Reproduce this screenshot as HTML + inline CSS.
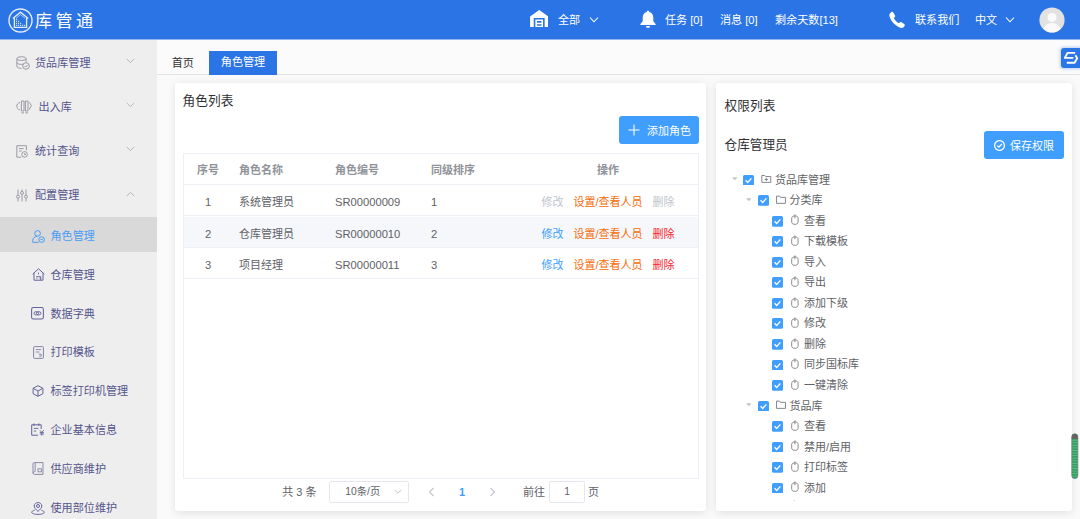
<!DOCTYPE html>
<html lang="zh-CN">
<head>
<meta charset="utf-8">
<title>库管通 - 角色管理</title>
<style>
*{box-sizing:border-box;margin:0;padding:0}
html,body{width:1080px;height:519px;overflow:hidden}
body{font-family:"Liberation Sans","Noto Sans CJK SC",sans-serif;font-size:12px;color:#333;background:#fafafa;position:relative}
.abs{position:absolute;white-space:nowrap}
#header{position:absolute;left:0;top:0;width:1080px;height:39px;background:#2b74e6;color:#fff}
#header .t{position:absolute;top:0.5px;height:39px;line-height:39px;font-size:11.1px;white-space:nowrap;color:#fff}
#logo-text{position:absolute;left:35px;top:2px;height:39px;line-height:40px;font-size:17px;letter-spacing:3.5px;color:#fff;white-space:nowrap}
#sidebar{position:absolute;left:0;top:39px;width:157px;height:480px;background:#eeeeee}
.m1{position:absolute;left:0;width:157px;height:44px;line-height:44px;color:#55558c;font-size:11.1px}
.m1 span{position:absolute;left:35px;top:0}
.m2{position:absolute;left:0;width:157px;height:38px;line-height:38px;color:#55558c;font-size:11.1px}
.m2 span{position:absolute;left:50.5px;top:0}
.m2.active{background:#d9d9d9;color:#4a9cf5}
#tabs{position:absolute;left:157px;top:39px;width:923px;height:35.7px;background:#fbfbfb;border-bottom:1px solid #e2e2e2}
.card{position:absolute;background:#fff;box-shadow:0 1.5px 9px rgba(0,0,0,.1);border-radius:3px}

.btn{background:#409eff;color:#fff;border-radius:3px;font-size:11px}
#tbl{position:absolute;left:8px;top:70px;width:516px;height:326px;border:1px solid #eef0f5;font-size:11px;color:#606266}
.tr{position:absolute;left:0;width:514px;height:32px;line-height:32px;border-bottom:1px solid #eef0f5}
.tr.th{color:#909399;font-weight:bold}
.tr.hl{background:#f5f7fa}
.tr span{position:absolute;top:0;white-space:nowrap}
.c1{left:0;width:48px;text-align:center}
.c2{left:55px}.c3{left:151px}.c4{left:247px}
.tr:not(.th) .c1,.tr:not(.th) .c3,.tr:not(.th) .c4{font-size:11.2px}
.c5{left:334px;width:180px;text-align:center}
.c5 i{font-style:normal;margin:0 5px}
.dis{color:#c0c4cc}.or{color:#f56c0a}.bl{color:#409eff}.rd{color:#f5222d}
#pg{position:absolute;left:0;top:398.7px;width:531px;height:20px;line-height:20px;font-size:11px;color:#606266}
.box{border:1px solid #e4e7ed;border-radius:2px;background:#fff;color:#606266}
.tn{height:20px;line-height:20px;font-size:11px;color:#606266}

</style>
</head>
<body>
<div id="header">
  <svg class="abs" style="left:7.9px;top:7.9px" width="25" height="25" viewBox="0 0 25 25" fill="none" stroke="#e4edfc">
    <circle cx="12.5" cy="12.5" r="11.5" stroke-width="1.4"/>
    <path d="M4.8 10.4 L12.5 4.2 L20.2 10.4" stroke-width="1.3"/>
    <path d="M6.4 9.4 V19.4 H18.6 V9.4" stroke-width="1.3"/>
    <path d="M8 10.2 L12.5 6.6 L17 10.2" stroke-width="0.8" stroke="#c3d6f8"/>
    <path d="M8.049999999999999 11.4h1.1M8.049999999999999 13.4h1.1M8.049999999999999 15.4h1.1M8.049999999999999 17.4h1.1M10.049999999999999 13.4h1.1M10.049999999999999 15.4h1.1M10.049999999999999 17.4h1.1M12.049999999999999 15.4h1.1M12.049999999999999 17.4h1.1M14.049999999999999 17.4h1.1M16.05 17.4h1.1" stroke-width="1.1" stroke="#cfdefa"/>
  </svg>
  <div id="logo-text">库管通</div>

  <svg class="abs" style="left:529.8px;top:9.6px" width="18.4" height="17.2" viewBox="0 0 18 17" fill="#fff">
    <path d="M9 0 L18 6.4 V17 H14.4 V7.8 H3.6 V17 H0 V6.4 Z"/>
    <path d="M5.2 9.4 H12.8 V17 H5.2 Z M6.8 11 V12.6 H11.2 V11 Z M6.8 14 V15.6 H11.2 V14 Z" fill-rule="evenodd"/>
  </svg>
  <div class="t" style="left:558px">全部</div>
  <svg class="abs" style="left:589px;top:16px" width="10" height="8" viewBox="0 0 10 8" fill="none" stroke="#fff" stroke-width="1.1"><path d="M1 1.5 L5 5.8 L9 1.5"/></svg>

  <svg class="abs" style="left:639px;top:10px" width="18" height="19" viewBox="0 0 18 19" fill="#fff">
    <path d="M9 0.8 C9.8 0.8 10.3 1.3 10.3 2 C13 2.7 14.3 5 14.3 7.6 V11.2 L16.6 14 V14.9 H1.4 V14 L3.7 11.2 V7.6 C3.7 5 5 2.7 7.7 2 C7.7 1.3 8.2 0.8 9 0.8 Z"/>
    <path d="M7 16 H11 C11 17.2 10.1 18 9 18 C7.9 18 7 17.2 7 16 Z"/>
  </svg>
  <div class="t" style="left:665px">任务 [0]</div>
  <div class="t" style="left:720px">消息 [0]</div>
  <div class="t" style="left:775px">剩余天数[13]</div>

  <svg class="abs" style="left:888px;top:11px" width="18" height="18" viewBox="0 0 18 18" fill="#fff">
    <path d="M3.2 1.2 C4 0.6 4.8 0.8 5.3 1.6 L7 4.4 C7.4 5.1 7.2 5.8 6.6 6.3 L5.8 6.9 C6.8 9 8.6 11 10.9 12.3 L11.6 11.5 C12.1 10.9 12.9 10.8 13.5 11.2 L16.2 13 C16.9 13.5 17 14.3 16.5 15 L15.8 15.9 C14.8 17.1 13.2 17.3 11.6 16.6 C6.9 14.5 3 10.3 1.6 5.6 C1.1 4 1.5 2.5 2.6 1.7 Z"/>
  </svg>
  <div class="t" style="left:915px">联系我们</div>
  <div class="t" style="left:975px">中文</div>
  <svg class="abs" style="left:1005px;top:16px" width="10" height="8" viewBox="0 0 10 8" fill="none" stroke="#fff" stroke-width="1.1"><path d="M1 1.5 L5 5.8 L9 1.5"/></svg>
  <svg class="abs" style="left:1039px;top:7px" width="26" height="26" viewBox="0 0 26 26">
    <defs><clipPath id="avc"><circle cx="13" cy="13" r="12.5"/></clipPath></defs>
    <circle cx="13" cy="13" r="12.6" fill="#e2e2e2"/>
    <g clip-path="url(#avc)" fill="#fafafa"><circle cx="13" cy="10.5" r="4.6"/><ellipse cx="13" cy="23" rx="8.5" ry="7"/></g>
  </svg>
</div>

<div id="sidebar">
  <div class="m1" style="top:1.7px"><span style="left:35px">货品库管理</span></div>
  <svg class="abs" style="left:16px;top:17.0px" width="14" height="14" viewBox="0 0 14 14" fill="none" stroke="#9a9aa6" stroke-width="1"><ellipse cx="5.5" cy="2.6" rx="4.6" ry="1.9"/><path d="M0.9 2.6V10.4C0.9 11.5 2.9 12.3 5.5 12.3 M10.1 2.6V6.2 M0.9 6.5C0.9 7.6 2.9 8.4 5.5 8.4 C6.2 8.4 6.8 8.35 7.3 8.25"/><circle cx="10" cy="10" r="3.3"/><path d="M8.5 10 L9.6 11.1 L11.6 8.9"/></svg>
  <svg class="abs" style="left:126px;top:19.2px" width="9" height="6" viewBox="0 0 9 6" fill="none" stroke="#b4b4bc" stroke-width="1"><path d="M0.8 1 L4.5 4.6 L8.2 1"/></svg>
  <div class="m1" style="top:45.8px"><span style="left:38.5px">出入库</span></div>
  <svg class="abs" style="left:16px;top:61.1px" width="16" height="14" viewBox="0 0 16 14" fill="none" stroke="#9a9aa6" stroke-width="1"><path d="M5.4 1H8V11H5.4Z M9.4 1H12V11H9.4Z M5.4 12.8H8M9.4 12.8H12"/><path d="M4 2.4C1.8 3 0.8 4.6 0.8 6.2C0.8 8 2 9.4 4 10"/><path d="M13.2 2.2L15.4 5.6L13.2 9.6"/></svg>
  <svg class="abs" style="left:126px;top:63.3px" width="9" height="6" viewBox="0 0 9 6" fill="none" stroke="#b4b4bc" stroke-width="1"><path d="M0.8 1 L4.5 4.6 L8.2 1"/></svg>
  <div class="m1" style="top:89.8px"><span style="left:35px">统计查询</span></div>
  <svg class="abs" style="left:16px;top:105.6px" width="12" height="13" viewBox="0 0 12 13" fill="none" stroke="#9a9aa6" stroke-width="1"><path d="M10.4 5.2V0.7H0.8V12.2H5.4"/><path d="M3 3.6H7.6 M3 6H5.6"/><circle cx="8.6" cy="9.4" r="2.8"/><path d="M8.6 8V9.6H10"/></svg>
  <svg class="abs" style="left:126px;top:107.3px" width="9" height="6" viewBox="0 0 9 6" fill="none" stroke="#b4b4bc" stroke-width="1"><path d="M0.8 1 L4.5 4.6 L8.2 1"/></svg>
  <div class="m1" style="top:134.3px"><span style="left:35px">配置管理</span></div>
  <svg class="abs" style="left:16px;top:150.1px" width="12" height="13" viewBox="0 0 12 13" fill="none" stroke="#9a9aa6" stroke-width="1"><path d="M2 0.5V6.2M2 9.2V12.5M6 0.5V2.4M6 5.4V12.5M10 0.5V6.2M10 9.2V12.5"/><circle cx="2" cy="7.7" r="1.5"/><circle cx="6" cy="3.9" r="1.5"/><circle cx="10" cy="7.7" r="1.5"/></svg>
  <svg class="abs" style="left:126px;top:151.8px" width="9" height="6" viewBox="0 0 9 6" fill="none" stroke="#b4b4bc" stroke-width="1"><path d="M0.8 5 L4.5 1.4 L8.2 5"/></svg>
  <div class="m2 active" style="top:177.5px;height:35.5px;line-height:39.4px"><span>角色管理</span></div>
  <svg class="abs" style="left:31.5px;top:190.7px" width="13" height="13" viewBox="0 0 13 13" fill="none" stroke="#4a9cf5" stroke-width="1"><circle cx="5.6" cy="3.4" r="2.8"/><path d="M6.6 12.3H0.7V10.6C0.7 8.2 2.6 6.6 5 6.4"/><circle cx="9.6" cy="9.6" r="2.8"/><path d="M8.4 9.6H10.8"/></svg>
  <div class="m2" style="top:216.6px"><span>仓库管理</span></div>
  <svg class="abs" style="left:31.5px;top:229.1px" width="13" height="13" viewBox="0 0 13 13" fill="none" stroke="#62629a" stroke-width="1"><path d="M0.6 6.2L6.5 0.8L12.4 6.2 M2 5.2V12.2H11V5.2"/><path d="M6.5 4.6V6.4 M4.3 8.6H8.7V12" stroke-width="0.9"/><path d="M4.4 10.2h1M7.6 10.2h1" stroke-width="1.2"/></svg>
  <div class="m2" style="top:255.7px"><span>数据字典</span></div>
  <svg class="abs" style="left:31.4px;top:268.1px" width="13" height="12.6" viewBox="0 0 13 12.6" fill="none" stroke="#62629a" stroke-width="1.05"><rect x="0.6" y="0.6" width="11.8" height="11.4" rx="1.8"/><ellipse cx="5.3" cy="6.3" rx="2.3" ry="1.7" stroke-width="0.9"/><ellipse cx="7.7" cy="6.3" rx="2.3" ry="1.7" stroke-width="0.9"/></svg>
  <div class="m2" style="top:294.2px"><span>打印模板</span></div>
  <svg class="abs" style="left:32.5px;top:306.7px" width="11" height="13" viewBox="0 0 11 13" fill="none" stroke="#8585a6" stroke-width="1"><rect x="0.6" y="0.6" width="9.8" height="11.8" rx="0.8"/><path d="M2.8 3.6H8.2 M2.8 6H6.4 M5.6 8.2H8.2V10.2H6.2" stroke-width="0.9"/></svg>
  <div class="m2" style="top:333.0px"><span>标签打印机管理</span></div>
  <svg class="abs" style="left:32px;top:346.0px" width="12" height="12" viewBox="0 0 12 12" fill="none" stroke="#62629a" stroke-width="1"><path d="M6 0.7L10.9 3.3V8.7L6 11.3L1.1 8.7V3.3Z M1.3 3.4L6 6L10.7 3.4 M6 6V11.2"/></svg>
  <div class="m2" style="top:371.7px"><span>企业基本信息</span></div>
  <svg class="abs" style="left:31px;top:384.2px" width="14" height="13" viewBox="0 0 14 13" fill="none" stroke="#62629a" stroke-width="1"><path d="M10.2 6V1.8H0.7V12.2H7"/><path d="M3 0.4V3 M7.8 0.4V3 M2.8 5.4H7.4 M2.8 8H5.2" stroke-width="0.9"/><path d="M8.8 7.2L10.8 9.4L12.8 7.2 M8.8 9.6H12.8 M8.8 11H12.8 M10.8 9.4V12.6" stroke-width="0.9"/></svg>
  <div class="m2" style="top:410.9px"><span>供应商维护</span></div>
  <svg class="abs" style="left:32px;top:423.4px" width="12" height="13" viewBox="0 0 12 13" fill="none" stroke="#8585a6" stroke-width="1"><path d="M1 10.8V1.8C1 1.1 1.6 0.6 2.3 0.6H11V12.4H2.4C1.6 12.4 1 11.8 1 11 C1 10.2 1.6 9.6 2.4 9.6H3" stroke-width="0.95"/><path d="M3.2 0.8V9.4" stroke-width="0.9"/><rect x="6" y="6.8" width="3.4" height="3" stroke-width="0.9"/></svg>
  <div class="m2" style="top:450.0px"><span>使用部位维护</span></div>
  <svg class="abs" style="left:31px;top:462.5px" width="14" height="13" viewBox="0 0 14 13" fill="none" stroke="#62629a" stroke-width="1"><path d="M7 9.4C4.8 7.4 3.2 5.8 3.2 4C3.2 2 4.9 0.6 7 0.6C9.1 0.6 10.8 2 10.8 4C10.8 5.8 9.2 7.4 7 9.4Z"/><circle cx="7" cy="4" r="1.5"/><path d="M3.6 8.2C1.8 8.7 0.7 9.5 0.7 10.3C0.7 11.5 3.5 12.4 7 12.4C10.5 12.4 13.3 11.5 13.3 10.3C13.3 9.5 12.2 8.7 10.4 8.2"/></svg>
</div>

<div id="tabs">
  <div class="abs" style="left:14.7px;top:12.6px;height:23px;line-height:23px;font-size:11.1px;color:#333">首页</div>
  <div class="abs" style="left:52px;top:12.4px;width:68px;height:23.3px;line-height:23.6px;font-size:11.1px;color:#fff;background:#2b74e6;text-align:center">角色管理</div>
</div>

<div class="card" id="left" style="left:175px;top:83px;width:531px;height:428px">
  <div class="abs" style="left:7.6px;top:8.2px;height:20px;line-height:20px;font-size:12.7px;color:#303133">角色列表</div>
  <div class="abs btn" style="left:444px;top:33px;width:80px;height:28px"><svg style="position:absolute;left:9px;top:8px" width="12" height="12" viewBox="0 0 12 12" stroke="#fff" stroke-width="1.1"><path d="M6 0.5V11.5M0.5 6H11.5"/></svg><span style="position:absolute;left:28px;top:1px;line-height:28px">添加角色</span></div>
  <div id="tbl">
    <div class="tr th" style="top:0;height:31.4px;line-height:33px"><span class="c1">序号</span><span class="c2">角色名称</span><span class="c3">角色编号</span><span class="c4">同级排序</span><span class="c5">操作</span></div>
    <div class="tr" style="top:31.4px;height:31.1px;line-height:35px"><span class="c1">1</span><span class="c2">系统管理员</span><span class="c3">SR00000009</span><span class="c4">1</span><span class="c5"><i class="dis">修改</i><i class="or">设置/查看人员</i><i class="dis">删除</i></span></div>
    <div class="tr hl" style="top:62.5px;height:31.7px;line-height:34px"><span class="c1">2</span><span class="c2">仓库管理员</span><span class="c3">SR00000010</span><span class="c4">2</span><span class="c5"><i class="bl">修改</i><i class="or">设置/查看人员</i><i class="rd">删除</i></span></div>
    <div class="tr" style="top:94.2px;height:31.3px;line-height:35px"><span class="c1">3</span><span class="c2">项目经理</span><span class="c3">SR00000011</span><span class="c4">3</span><span class="c5"><i class="bl">修改</i><i class="or">设置/查看人员</i><i class="rd">删除</i></span></div>
  </div>
  <div id="pg">
    <div class="abs" style="left:107.3px;top:0">共 3 条</div>
    <div class="abs box" style="left:154.3px;top:-0.6px;width:79.5px;height:22px"><span style="position:absolute;left:15px;top:0;line-height:20px;font-size:10.3px">10条/页</span><svg style="position:absolute;left:64px;top:7px" width="8" height="6" viewBox="0 0 8 6" fill="none" stroke="#c0c4cc" stroke-width="1"><path d="M0.8 1 L4 4.2 L7.2 1"/></svg></div>
    <svg class="abs" style="left:253px;top:5px" width="7" height="10" viewBox="0 0 7 10" fill="none" stroke="#c0c4cc" stroke-width="1.1"><path d="M5.5 1 L1.5 5 L5.5 9"/></svg>
    <div class="abs" style="left:284px;top:0;color:#409eff;font-weight:bold;font-size:11px">1</div>
    <svg class="abs" style="left:314px;top:5px" width="7" height="10" viewBox="0 0 7 10" fill="none" stroke="#c0c4cc" stroke-width="1.1"><path d="M1.5 1 L5.5 5 L1.5 9"/></svg>
    <div class="abs" style="left:348px;top:0">前往</div>
    <div class="abs box" style="left:374px;top:-0.6px;width:36px;height:22px;text-align:center;line-height:20px;font-size:10.3px">1</div>
    <div class="abs" style="left:413px;top:0">页</div>
  </div>
</div>
<div class="card" id="right" style="left:716px;top:83px;width:356px;height:428px">
  <div class="abs" style="left:8.6px;top:12.8px;height:20px;line-height:20px;font-size:12.7px;color:#303133">权限列表</div>
  <div class="abs" style="left:8.6px;top:51.6px;height:20px;line-height:20px;font-size:12.6px;color:#303133">仓库管理员</div>
  <div class="abs btn" style="left:268px;top:48px;width:80px;height:28px"><svg style="position:absolute;left:10px;top:9px" width="11" height="11" viewBox="0 0 11 11" fill="none" stroke="#fff" stroke-width="1.25"><circle cx="5.5" cy="5.5" r="4.9"/><path d="M3.2 5.6 L4.9 7.2 L7.9 4"/></svg><span style="position:absolute;left:26px;top:1px;line-height:28px">保存权限</span></div>
    <svg class="abs" style="left:15.9px;top:94.3px" width="5.6" height="3.6" viewBox="0 0 7 5" preserveAspectRatio="none"><path d="M0 0.5H7L3.5 4.5Z" fill="#c0c4cc"/></svg>
    <svg class="abs" style="left:27.1px;top:91.6px" width="11" height="10.8" viewBox="0 0 11 11" preserveAspectRatio="none"><rect width="11" height="11" rx="1.6" fill="#409eff"/><path d="M2.6 5.4 L4.7 7.6 L8.4 3.4" fill="none" stroke="#fff" stroke-width="1.3"/></svg>
    <svg class="abs" style="left:45.2px;top:90.7px" width="10.6" height="9.1" viewBox="0 0 11 10" fill="none" stroke="#797b80" stroke-width="1"><path d="M0.6 1.6 H3.8 L4.8 2.8 H10.4 V9.2 H0.6 Z"/><path d="M5.5 4.2V7.8M3.7 6H7.3"/></svg>
    <div class="abs tn" style="left:59.0px;top:86.5px">货品库管理</div>
    <svg class="abs" style="left:29.9px;top:114.9px" width="5.6" height="3.6" viewBox="0 0 7 5" preserveAspectRatio="none"><path d="M0 0.5H7L3.5 4.5Z" fill="#c0c4cc"/></svg>
    <svg class="abs" style="left:41.6px;top:112.2px" width="11" height="10.8" viewBox="0 0 11 11" preserveAspectRatio="none"><rect width="11" height="11" rx="1.6" fill="#409eff"/><path d="M2.6 5.4 L4.7 7.6 L8.4 3.4" fill="none" stroke="#fff" stroke-width="1.3"/></svg>
    <svg class="abs" style="left:59.6px;top:112.0px" width="10" height="9.1" viewBox="0 0 11 10" fill="none" stroke="#797b80" stroke-width="1"><path d="M0.6 1.2 H4 L5 2.6 H10.4 V9.2 H0.6 Z"/></svg>
    <div class="abs tn" style="left:73.5px;top:107.1px">分类库</div>
    <svg class="abs" style="left:55.9px;top:132.8px" width="11" height="10.8" viewBox="0 0 11 11" preserveAspectRatio="none"><rect width="11" height="11" rx="1.6" fill="#409eff"/><path d="M2.6 5.4 L4.7 7.6 L8.4 3.4" fill="none" stroke="#fff" stroke-width="1.3"/></svg>
    <svg class="abs" style="left:75.0px;top:131.4px" width="7.8" height="11" viewBox="0 0 8 11" fill="none" stroke="#7d7f84" stroke-width="0.95"><path d="M3.2 1.9 H4.8 C6.2 1.9 7.3 3 7.3 4.4 V7.9 C7.3 9.3 6.2 10.4 4.8 10.4 H3.2 C1.8 10.4 0.7 9.3 0.7 7.9 V4.4 C0.7 3 1.8 1.9 3.2 1.9 Z"/><path d="M4 0.3 V4.2"/></svg>
    <div class="abs tn" style="left:88.0px;top:127.7px">查看</div>
    <svg class="abs" style="left:55.9px;top:153.3px" width="11" height="10.8" viewBox="0 0 11 11" preserveAspectRatio="none"><rect width="11" height="11" rx="1.6" fill="#409eff"/><path d="M2.6 5.4 L4.7 7.6 L8.4 3.4" fill="none" stroke="#fff" stroke-width="1.3"/></svg>
    <svg class="abs" style="left:75.0px;top:151.9px" width="7.8" height="11" viewBox="0 0 8 11" fill="none" stroke="#7d7f84" stroke-width="0.95"><path d="M3.2 1.9 H4.8 C6.2 1.9 7.3 3 7.3 4.4 V7.9 C7.3 9.3 6.2 10.4 4.8 10.4 H3.2 C1.8 10.4 0.7 9.3 0.7 7.9 V4.4 C0.7 3 1.8 1.9 3.2 1.9 Z"/><path d="M4 0.3 V4.2"/></svg>
    <div class="abs tn" style="left:88.0px;top:148.2px">下载模板</div>
    <svg class="abs" style="left:55.9px;top:173.8px" width="11" height="10.8" viewBox="0 0 11 11" preserveAspectRatio="none"><rect width="11" height="11" rx="1.6" fill="#409eff"/><path d="M2.6 5.4 L4.7 7.6 L8.4 3.4" fill="none" stroke="#fff" stroke-width="1.3"/></svg>
    <svg class="abs" style="left:75.0px;top:172.4px" width="7.8" height="11" viewBox="0 0 8 11" fill="none" stroke="#7d7f84" stroke-width="0.95"><path d="M3.2 1.9 H4.8 C6.2 1.9 7.3 3 7.3 4.4 V7.9 C7.3 9.3 6.2 10.4 4.8 10.4 H3.2 C1.8 10.4 0.7 9.3 0.7 7.9 V4.4 C0.7 3 1.8 1.9 3.2 1.9 Z"/><path d="M4 0.3 V4.2"/></svg>
    <div class="abs tn" style="left:88.0px;top:168.7px">导入</div>
    <svg class="abs" style="left:55.9px;top:194.4px" width="11" height="10.8" viewBox="0 0 11 11" preserveAspectRatio="none"><rect width="11" height="11" rx="1.6" fill="#409eff"/><path d="M2.6 5.4 L4.7 7.6 L8.4 3.4" fill="none" stroke="#fff" stroke-width="1.3"/></svg>
    <svg class="abs" style="left:75.0px;top:193.0px" width="7.8" height="11" viewBox="0 0 8 11" fill="none" stroke="#7d7f84" stroke-width="0.95"><path d="M3.2 1.9 H4.8 C6.2 1.9 7.3 3 7.3 4.4 V7.9 C7.3 9.3 6.2 10.4 4.8 10.4 H3.2 C1.8 10.4 0.7 9.3 0.7 7.9 V4.4 C0.7 3 1.8 1.9 3.2 1.9 Z"/><path d="M4 0.3 V4.2"/></svg>
    <div class="abs tn" style="left:88.0px;top:189.3px">导出</div>
    <svg class="abs" style="left:55.9px;top:214.9px" width="11" height="10.8" viewBox="0 0 11 11" preserveAspectRatio="none"><rect width="11" height="11" rx="1.6" fill="#409eff"/><path d="M2.6 5.4 L4.7 7.6 L8.4 3.4" fill="none" stroke="#fff" stroke-width="1.3"/></svg>
    <svg class="abs" style="left:75.0px;top:213.5px" width="7.8" height="11" viewBox="0 0 8 11" fill="none" stroke="#7d7f84" stroke-width="0.95"><path d="M3.2 1.9 H4.8 C6.2 1.9 7.3 3 7.3 4.4 V7.9 C7.3 9.3 6.2 10.4 4.8 10.4 H3.2 C1.8 10.4 0.7 9.3 0.7 7.9 V4.4 C0.7 3 1.8 1.9 3.2 1.9 Z"/><path d="M4 0.3 V4.2"/></svg>
    <div class="abs tn" style="left:88.0px;top:209.8px">添加下级</div>
    <svg class="abs" style="left:55.9px;top:235.4px" width="11" height="10.8" viewBox="0 0 11 11" preserveAspectRatio="none"><rect width="11" height="11" rx="1.6" fill="#409eff"/><path d="M2.6 5.4 L4.7 7.6 L8.4 3.4" fill="none" stroke="#fff" stroke-width="1.3"/></svg>
    <svg class="abs" style="left:75.0px;top:234.0px" width="7.8" height="11" viewBox="0 0 8 11" fill="none" stroke="#7d7f84" stroke-width="0.95"><path d="M3.2 1.9 H4.8 C6.2 1.9 7.3 3 7.3 4.4 V7.9 C7.3 9.3 6.2 10.4 4.8 10.4 H3.2 C1.8 10.4 0.7 9.3 0.7 7.9 V4.4 C0.7 3 1.8 1.9 3.2 1.9 Z"/><path d="M4 0.3 V4.2"/></svg>
    <div class="abs tn" style="left:88.0px;top:230.3px">修改</div>
    <svg class="abs" style="left:55.9px;top:256.0px" width="11" height="10.8" viewBox="0 0 11 11" preserveAspectRatio="none"><rect width="11" height="11" rx="1.6" fill="#409eff"/><path d="M2.6 5.4 L4.7 7.6 L8.4 3.4" fill="none" stroke="#fff" stroke-width="1.3"/></svg>
    <svg class="abs" style="left:75.0px;top:254.6px" width="7.8" height="11" viewBox="0 0 8 11" fill="none" stroke="#7d7f84" stroke-width="0.95"><path d="M3.2 1.9 H4.8 C6.2 1.9 7.3 3 7.3 4.4 V7.9 C7.3 9.3 6.2 10.4 4.8 10.4 H3.2 C1.8 10.4 0.7 9.3 0.7 7.9 V4.4 C0.7 3 1.8 1.9 3.2 1.9 Z"/><path d="M4 0.3 V4.2"/></svg>
    <div class="abs tn" style="left:88.0px;top:250.9px">删除</div>
    <svg class="abs" style="left:55.9px;top:276.5px" width="11" height="10.8" viewBox="0 0 11 11" preserveAspectRatio="none"><rect width="11" height="11" rx="1.6" fill="#409eff"/><path d="M2.6 5.4 L4.7 7.6 L8.4 3.4" fill="none" stroke="#fff" stroke-width="1.3"/></svg>
    <svg class="abs" style="left:75.0px;top:275.1px" width="7.8" height="11" viewBox="0 0 8 11" fill="none" stroke="#7d7f84" stroke-width="0.95"><path d="M3.2 1.9 H4.8 C6.2 1.9 7.3 3 7.3 4.4 V7.9 C7.3 9.3 6.2 10.4 4.8 10.4 H3.2 C1.8 10.4 0.7 9.3 0.7 7.9 V4.4 C0.7 3 1.8 1.9 3.2 1.9 Z"/><path d="M4 0.3 V4.2"/></svg>
    <div class="abs tn" style="left:88.0px;top:271.4px">同步国标库</div>
    <svg class="abs" style="left:55.9px;top:297.0px" width="11" height="10.8" viewBox="0 0 11 11" preserveAspectRatio="none"><rect width="11" height="11" rx="1.6" fill="#409eff"/><path d="M2.6 5.4 L4.7 7.6 L8.4 3.4" fill="none" stroke="#fff" stroke-width="1.3"/></svg>
    <svg class="abs" style="left:75.0px;top:295.6px" width="7.8" height="11" viewBox="0 0 8 11" fill="none" stroke="#7d7f84" stroke-width="0.95"><path d="M3.2 1.9 H4.8 C6.2 1.9 7.3 3 7.3 4.4 V7.9 C7.3 9.3 6.2 10.4 4.8 10.4 H3.2 C1.8 10.4 0.7 9.3 0.7 7.9 V4.4 C0.7 3 1.8 1.9 3.2 1.9 Z"/><path d="M4 0.3 V4.2"/></svg>
    <div class="abs tn" style="left:88.0px;top:291.9px">一键清除</div>
    <svg class="abs" style="left:29.9px;top:320.3px" width="5.6" height="3.6" viewBox="0 0 7 5" preserveAspectRatio="none"><path d="M0 0.5H7L3.5 4.5Z" fill="#c0c4cc"/></svg>
    <svg class="abs" style="left:41.6px;top:317.6px" width="11" height="10.8" viewBox="0 0 11 11" preserveAspectRatio="none"><rect width="11" height="11" rx="1.6" fill="#409eff"/><path d="M2.6 5.4 L4.7 7.6 L8.4 3.4" fill="none" stroke="#fff" stroke-width="1.3"/></svg>
    <svg class="abs" style="left:59.6px;top:317.4px" width="10" height="9.1" viewBox="0 0 11 10" fill="none" stroke="#797b80" stroke-width="1"><path d="M0.6 1.2 H4 L5 2.6 H10.4 V9.2 H0.6 Z"/></svg>
    <div class="abs tn" style="left:73.5px;top:312.5px">货品库</div>
    <svg class="abs" style="left:55.9px;top:338.1px" width="11" height="10.8" viewBox="0 0 11 11" preserveAspectRatio="none"><rect width="11" height="11" rx="1.6" fill="#409eff"/><path d="M2.6 5.4 L4.7 7.6 L8.4 3.4" fill="none" stroke="#fff" stroke-width="1.3"/></svg>
    <svg class="abs" style="left:75.0px;top:336.7px" width="7.8" height="11" viewBox="0 0 8 11" fill="none" stroke="#7d7f84" stroke-width="0.95"><path d="M3.2 1.9 H4.8 C6.2 1.9 7.3 3 7.3 4.4 V7.9 C7.3 9.3 6.2 10.4 4.8 10.4 H3.2 C1.8 10.4 0.7 9.3 0.7 7.9 V4.4 C0.7 3 1.8 1.9 3.2 1.9 Z"/><path d="M4 0.3 V4.2"/></svg>
    <div class="abs tn" style="left:88.0px;top:333.0px">查看</div>
    <svg class="abs" style="left:55.9px;top:358.6px" width="11" height="10.8" viewBox="0 0 11 11" preserveAspectRatio="none"><rect width="11" height="11" rx="1.6" fill="#409eff"/><path d="M2.6 5.4 L4.7 7.6 L8.4 3.4" fill="none" stroke="#fff" stroke-width="1.3"/></svg>
    <svg class="abs" style="left:75.0px;top:357.2px" width="7.8" height="11" viewBox="0 0 8 11" fill="none" stroke="#7d7f84" stroke-width="0.95"><path d="M3.2 1.9 H4.8 C6.2 1.9 7.3 3 7.3 4.4 V7.9 C7.3 9.3 6.2 10.4 4.8 10.4 H3.2 C1.8 10.4 0.7 9.3 0.7 7.9 V4.4 C0.7 3 1.8 1.9 3.2 1.9 Z"/><path d="M4 0.3 V4.2"/></svg>
    <div class="abs tn" style="left:88.0px;top:353.5px">禁用/启用</div>
    <svg class="abs" style="left:55.9px;top:379.2px" width="11" height="10.8" viewBox="0 0 11 11" preserveAspectRatio="none"><rect width="11" height="11" rx="1.6" fill="#409eff"/><path d="M2.6 5.4 L4.7 7.6 L8.4 3.4" fill="none" stroke="#fff" stroke-width="1.3"/></svg>
    <svg class="abs" style="left:75.0px;top:377.8px" width="7.8" height="11" viewBox="0 0 8 11" fill="none" stroke="#7d7f84" stroke-width="0.95"><path d="M3.2 1.9 H4.8 C6.2 1.9 7.3 3 7.3 4.4 V7.9 C7.3 9.3 6.2 10.4 4.8 10.4 H3.2 C1.8 10.4 0.7 9.3 0.7 7.9 V4.4 C0.7 3 1.8 1.9 3.2 1.9 Z"/><path d="M4 0.3 V4.2"/></svg>
    <div class="abs tn" style="left:88.0px;top:374.1px">打印标签</div>
    <svg class="abs" style="left:55.9px;top:399.7px" width="11" height="10.8" viewBox="0 0 11 11" preserveAspectRatio="none"><rect width="11" height="11" rx="1.6" fill="#409eff"/><path d="M2.6 5.4 L4.7 7.6 L8.4 3.4" fill="none" stroke="#fff" stroke-width="1.3"/></svg>
    <svg class="abs" style="left:75.0px;top:398.3px" width="7.8" height="11" viewBox="0 0 8 11" fill="none" stroke="#7d7f84" stroke-width="0.95"><path d="M3.2 1.9 H4.8 C6.2 1.9 7.3 3 7.3 4.4 V7.9 C7.3 9.3 6.2 10.4 4.8 10.4 H3.2 C1.8 10.4 0.7 9.3 0.7 7.9 V4.4 C0.7 3 1.8 1.9 3.2 1.9 Z"/><path d="M4 0.3 V4.2"/></svg>
    <div class="abs tn" style="left:88.0px;top:394.6px">添加</div>
</div>

<div class="abs" style="left:0;top:39px;width:1080px;height:1px;background:#8fb4ee"></div>
<div id="nexthint" class="abs" style="left:794.4px;top:500px;width:1px;height:1.4px;background:#c9cbcf"></div>
<div class="abs" style="left:1061px;top:48px;width:19px;height:20px;background:#2b76e6;border-radius:3px 0 0 3px;box-shadow:0 0 3px 1px rgba(60,120,230,.35)">
  <svg style="position:absolute;left:0;top:0" width="19" height="20" viewBox="0 0 19 20" fill="none" stroke="#fff" stroke-width="1.9" stroke-linejoin="round"><path d="M14.2 4.9 H6.6 L3.8 9.9 H12.4"/><path d="M14.4 7.2 L16.2 10.2 L13.6 14.8 H5.8"/></svg>
</div>
<svg class="abs" style="left:1071.4px;top:433.3px" width="7.6" height="46.4" preserveAspectRatio="none" viewBox="0 0 8 47">
  <defs><pattern id="stripe" width="8" height="2.6" patternUnits="userSpaceOnUse"><rect width="8" height="2.6" fill="#2f9e60"/><rect y="1.6" width="8" height="1" fill="#55c184"/></pattern>
  <clipPath id="sbc"><rect x="0.8" y="0.8" width="6.4" height="45.4" rx="3.2"/></clipPath></defs>
  <g clip-path="url(#sbc)"><rect width="8" height="47" fill="url(#stripe)"/><rect width="8" height="6" fill="#636363"/></g>
  <rect x="0.8" y="0.8" width="6.4" height="45.4" rx="3.2" fill="none" stroke="#707070" stroke-width="0.7"/>
</svg>
</body>
</html>
